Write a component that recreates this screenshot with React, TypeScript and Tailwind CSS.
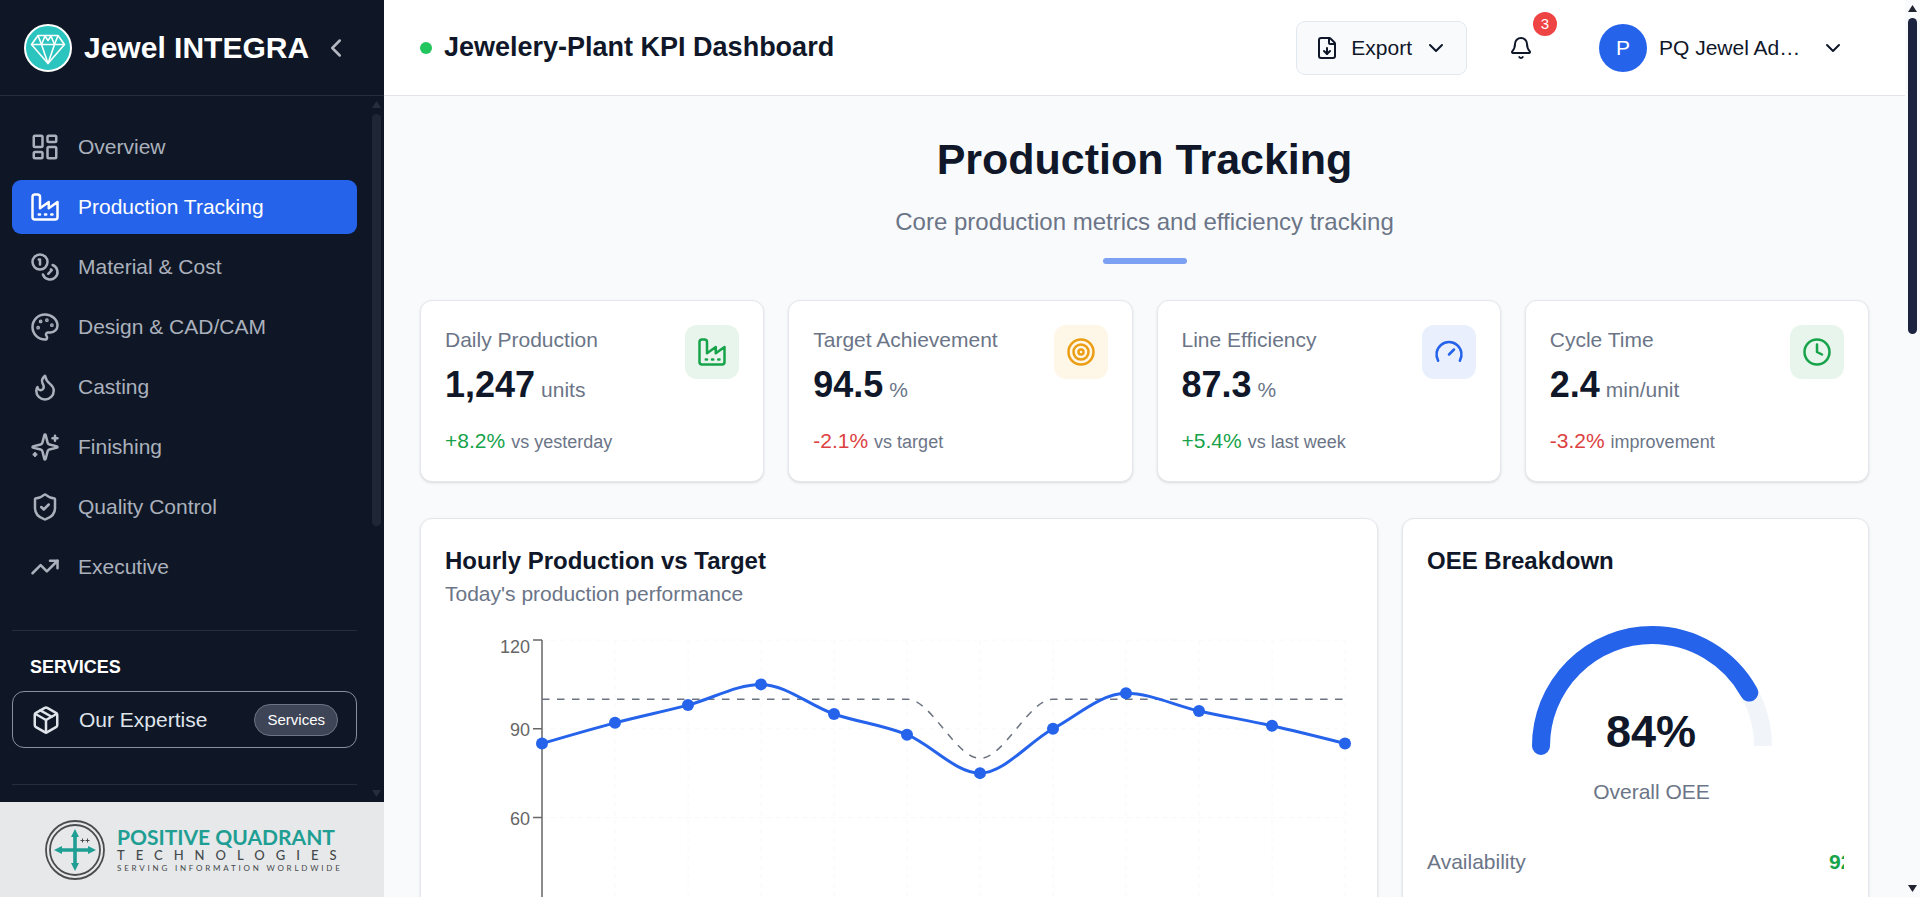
import type { ComponentType, ReactNode } from "react";
import {
  Bell,
  ChevronDown,
  ChevronLeft,
  Clock,
  FileDown,
  Gauge,
  LayoutDashboard,
  Package,
  ShieldCheck,
  Target,
  TrendingUp,
} from "lucide-react";

type IconType = ComponentType<{ className?: string }>;

type NavItem = { label: string; icon: IconType };

type Kpi = {
  title: string;
  value: string;
  unit: string;
  change: string;
  note: string;
  icon: IconType;
  iconStyle: string;
};

const outline = (shapes: ReactNode): IconType =>
  ({ className }) => (
    <svg
      viewBox="0 0 24 24"
      className={className}
      fill="none"
      stroke="currentColor"
      strokeWidth="2"
      strokeLinecap="round"
      strokeLinejoin="round"
      aria-hidden="true"
    >
      {shapes}
    </svg>
  );

const Factory = outline(
  <>
    <path d="M2 20a2 2 0 0 0 2 2h16a2 2 0 0 0 2-2V8l-7 5V8l-7 5V4a2 2 0 0 0-2-2H4a2 2 0 0 0-2 2Z" />
    <path d="M17 18h1M12 18h1M7 18h1" />
  </>
);

const Coins = outline(
  <>
    <circle cx="8" cy="8" r="6" />
    <path d="M18.09 10.37A6 6 0 1 1 10.34 18" />
    <path d="M7 6h1v4" />
    <path d="m16.71 13.88.7.71-2.82 2.82" />
  </>
);

const Palette = outline(
  <>
    <circle cx="13.5" cy="6.5" r=".5" fill="currentColor" />
    <circle cx="17.5" cy="10.5" r=".5" fill="currentColor" />
    <circle cx="8.5" cy="7.5" r=".5" fill="currentColor" />
    <circle cx="6.5" cy="12.5" r=".5" fill="currentColor" />
    <path d="M12 2C6.5 2 2 6.5 2 12s4.5 10 10 10c.926 0 1.648-.746 1.648-1.688 0-.437-.18-.835-.437-1.125-.29-.289-.438-.652-.438-1.125a1.64 1.64 0 0 1 1.668-1.668h1.996c3.051 0 5.555-2.503 5.555-5.554C21.965 6.012 17.461 2 12 2z" />
  </>
);

const Flame = outline(
  <path d="M8.5 14.5A2.5 2.5 0 0 0 11 12c0-1.38-.5-2-1-3-1.072-2.143-.224-4.054 2-6 .5 2.5 2 4.9 4 6.5 2 1.6 3 3.5 3 5.5a7 7 0 1 1-14 0c0-1.153.433-2.294 1-3a2.5 2.5 0 0 0 2.5 2.5z" />
);

const Sparkles = outline(
  <>
    <path d="M9.937 15.5A2 2 0 0 0 8.5 14.063l-6.135-1.582a.5.5 0 0 1 0-.962L8.5 9.936A2 2 0 0 0 9.937 8.5l1.582-6.135a.5.5 0 0 1 .963 0L14.063 8.5A2 2 0 0 0 15.5 9.937l6.135 1.581a.5.5 0 0 1 0 .964L15.5 14.063a2 2 0 0 0-1.437 1.437l-1.582 6.135a.5.5 0 0 1-.963 0z" />
    <path d="M20 3v4M22 5h-4M4 17v2M5 18H3" />
  </>
);

const navItems: NavItem[] = [
  { label: "Overview", icon: LayoutDashboard },
  { label: "Production Tracking", icon: Factory },
  { label: "Material & Cost", icon: Coins },
  { label: "Design & CAD/CAM", icon: Palette },
  { label: "Casting", icon: Flame },
  { label: "Finishing", icon: Sparkles },
  { label: "Quality Control", icon: ShieldCheck },
  { label: "Executive", icon: TrendingUp },
];

const kpis: Kpi[] = [
  {
    title: "Daily Production",
    value: "1,247",
    unit: "units",
    change: "+8.2%",
    note: "vs yesterday",
    icon: Factory,
    iconStyle: "bg-[#e8f5ec] text-[#16a34a]",
  },
  {
    title: "Target Achievement",
    value: "94.5",
    unit: "%",
    change: "-2.1%",
    note: "vs target",
    icon: Target,
    iconStyle: "bg-[#fef6e6] text-[#eb9d13]",
  },
  {
    title: "Line Efficiency",
    value: "87.3",
    unit: "%",
    change: "+5.4%",
    note: "vs last week",
    icon: Gauge,
    iconStyle: "bg-[#e9effd] text-[#2563eb]",
  },
  {
    title: "Cycle Time",
    value: "2.4",
    unit: "min/unit",
    change: "-3.2%",
    note: "improvement",
    icon: Clock,
    iconStyle: "bg-[#e8f5ec] text-[#16a34a]",
  },
];

const actual = [85, 92, 98, 105, 95, 88, 75, 90, 102, 96, 91, 85];
const target = [100, 100, 100, 100, 100, 100, 80, 100, 100, 100, 100, 100];

const CHART = { width: 908, height: 450, left: 97, right: 900, top: 7, bottom: 362 };

const chartX = (i: number) =>
  CHART.left + (i * (CHART.right - CHART.left)) / (actual.length - 1);
const chartY = (v: number) =>
  CHART.bottom - (v / 120) * (CHART.bottom - CHART.top);

// Monotone cubic interpolation, so that the line never overshoots a reading
const monotonePath = (values: number[]) => {
  const n = values.length;
  const dx = chartX(1) - chartX(0);
  const ys = values.map(chartY);
  const slopes = ys.slice(1).map((y, i) => (y - ys[i]) / dx);
  const tangents = ys.map((_, i) => {
    if (i === 0 || i === n - 1) return 0;
    const a = slopes[i - 1];
    const b = slopes[i];
    if (a * b <= 0) return 0;
    return Math.sign(a) * Math.min(Math.abs(a), Math.abs(b), Math.abs(a + b) / 4) * 2;
  });
  tangents[0] = (3 * slopes[0] - tangents[1]) / 2;
  tangents[n - 1] = (3 * slopes[n - 2] - tangents[n - 2]) / 2;

  let d = `M${chartX(0)},${ys[0]}`;
  for (let i = 0; i < n - 1; i++) {
    const x0 = chartX(i);
    const x1 = chartX(i + 1);
    d += `C${x0 + dx / 3},${ys[i] + (tangents[i] * dx) / 3} ${x1 - dx / 3},${
      ys[i + 1] - (tangents[i + 1] * dx) / 3
    } ${x1},${ys[i + 1]}`;
  }
  return d;
};

const DiamondLogo = () => (
  <svg viewBox="0 0 48 48" className="size-12 shrink-0" aria-hidden="true">
    <circle cx="24" cy="24" r="23" fill="#2bc4bf" stroke="#fff" strokeWidth="2" />
    <g fill="none" stroke="#fff" strokeWidth="1.6" strokeLinejoin="round">
      <path d="M14 11.5H34L40.5 20.5L24 39.5L7.5 20.5Z" />
      <path d="M7.5 20.5H40.5M14 11.5L17.5 20.5L24 39.5L30.5 20.5L34 11.5" />
      <path d="M17.5 20.5L21 12L24 16.5L27 12L30.5 20.5" />
    </g>
  </svg>
);

const CompanyLogo = () => (
  <div className="flex items-center gap-3">
    <svg viewBox="0 0 60 60" className="size-15 shrink-0" aria-hidden="true">
      <g fill="none" stroke="#4a4d50">
        <circle cx="30" cy="30" r="29" strokeWidth="1.8" />
        <circle cx="30" cy="30" r="25" strokeWidth="1.8" />
      </g>
      <path d="M30 15V45M15 30H45" stroke="#1f9e94" strokeWidth="3.6" />
      <path
        fill="#1f9e94"
        d="M30 9L34 17H26ZM30 51L34 43H26ZM9 30L17 26V34ZM51 30L43 26V34Z"
      />
      <path d="M35.5 20.5h4M37.5 18.5v4M40.5 20.5h4M42.5 18.5v4" stroke="#4a4d50" />
    </svg>
    <div className="flex flex-col font-[Lato,sans-serif] whitespace-nowrap text-[#45484b]">
      <span className="text-[21px] leading-5 font-bold text-[#1f9e94]">POSITIVE QUADRANT</span>
      <span className="text-[13px] leading-4 font-medium tracking-[11px]">TECHNOLOGIES</span>
      <span className="text-[8px] leading-[10px] tracking-[0.35em]">SERVING INFORMATION WORLDWIDE</span>
    </div>
  </div>
);

const ScrollRail = ({ tone }: { tone: "dark" | "light" }) => {
  const dark = tone === "dark";
  const arrow = dark ? "fill-[#262e3d]" : "fill-[#1f2430]";
  return (
    <div
      aria-hidden="true"
      className={`flex w-[15px] shrink-0 flex-col items-center ${dark ? "ml-3" : ""}`}
    >
      <svg viewBox="0 0 15 18" className="h-[18px] w-full shrink-0">
        <path d="M7.5 5L12 12H3Z" className={arrow} />
      </svg>
      <div className="min-h-0 w-full flex-1 px-[3px]">
        <div className={dark ? "h-103 rounded-full bg-[#1f2737]" : "h-79 rounded-full bg-[#1c2340]"} />
      </div>
      <svg viewBox="0 0 15 18" className="h-[18px] w-full shrink-0">
        <path d="M7.5 13L12 6H3Z" className={arrow} />
      </svg>
    </div>
  );
};

const Sidebar = () => (
  <aside className="flex w-96 shrink-0 flex-col bg-[#0f1726]">
    <div className="flex h-24 shrink-0 items-center gap-3 border-b border-[#262e3d] px-6">
      <DiamondLogo />
      <span className="text-[30px] font-bold whitespace-nowrap text-white">Jewel INTEGRA</span>
      <button type="button" aria-label="Collapse sidebar" className="text-[#b3b8c1]">
        <ChevronLeft className="size-[30px]" />
      </button>
    </div>

    <div className="flex min-h-0 flex-1">
      <div className="flex-1 overflow-hidden pt-6 pl-3">
        <nav className="flex flex-col gap-1.5">
          {navItems.map(({ label, icon: Icon }) => {
            const active = label === "Production Tracking";
            return (
              <a
                key={label}
                href="#"
                aria-current={active ? "page" : undefined}
                className={`flex h-[54px] items-center gap-[18px] rounded-[9px] px-[18px] text-[21px] ${
                  active ? "bg-[#2563eb] text-white" : "text-[#abb1bc]"
                }`}
              >
                <Icon className="size-[30px] shrink-0" />
                {label}
              </a>
            );
          })}
        </nav>

        <div className="mt-9 border-t border-[#262e3d] pt-6">
          <h2 className="px-[18px] text-lg leading-6 font-bold text-white">SERVICES</h2>
          <a
            href="#"
            className="mt-3 flex h-[57px] items-center rounded-xl border border-[#8a909b] px-[18px] text-[21px] text-[#dfe3ea]"
          >
            <Package className="size-[30px] shrink-0" />
            <span className="ml-[18px] flex-1">Our Expertise</span>
            <span className="rounded-full border border-[#6c7382] bg-[#3e4556] px-3 py-1 text-[15px] leading-[22px] text-white">
              Services
            </span>
          </a>
        </div>
        <div className="mt-9 border-t border-[#262e3d]" />
      </div>
      <ScrollRail tone="dark" />
    </div>

    <div className="flex h-[95px] shrink-0 items-center bg-[#e6e8e9] pl-[45px]">
      <CompanyLogo />
    </div>
  </aside>
);

const Header = () => (
  <header className="flex h-24 shrink-0 items-center justify-between border-b border-[#e2e5ea] bg-white px-9">
    <div className="flex items-center gap-3">
      <span className="size-3 rounded-full bg-[#22c55e]" />
      <h1 className="text-[27px] font-bold text-[#0f1729]">Jewelery-Plant KPI Dashboard</h1>
    </div>
    <div className="flex items-center gap-6 text-[#0f1729]">
      <button
        type="button"
        className="flex h-[54px] items-center gap-3 rounded-[9px] border border-[#e2e8f0] bg-[#f8fafc] px-[18px] text-[21px]"
      >
        <FileDown className="size-6" />
        Export
        <ChevronDown className="size-6" />
      </button>
      <button type="button" aria-label="Notifications" className="relative grid size-[60px] place-items-center">
        <Bell className="size-6" />
        <span className="absolute -top-1.5 -right-1.5 grid size-6 place-items-center rounded-full bg-[#ef4444] text-[15px] leading-none text-white">
          3
        </span>
      </button>
      <button type="button" className="flex items-center gap-3 px-6 text-[21px]">
        <span className="grid size-12 place-items-center rounded-full bg-[#2563eb] text-white">P</span>
        <span className="w-36 truncate text-left">PQ Jewel Admin</span>
        <ChevronDown className="ml-1.5 size-6" />
      </button>
    </div>
  </header>
);

const KpiCard = ({ title, value, unit, change, note, icon: Icon, iconStyle }: Kpi) => (
  <article className="flex justify-between rounded-xl border border-[#e4e8ee] bg-white p-6 shadow-sm">
    <div>
      <h3 className="text-[21px] leading-[30px] text-[#6b7587]">{title}</h3>
      <p className="mt-[7px] flex items-baseline gap-1.5">
        <span className="text-4xl leading-[45px] font-bold text-[#0f1729]">{value}</span>
        <span className="text-[21px] text-[#6b7587]">{unit}</span>
      </p>
      <p className="mt-[19px] flex items-baseline gap-1.5 text-[21px] leading-[30px]">
        <span className={change.startsWith("+") ? "text-[#16a34a]" : "text-[#dc4141]"}>{change}</span>
        <span className="text-lg leading-[30px] text-[#6b7587]">{note}</span>
      </p>
    </div>
    <span className={`grid size-[54px] shrink-0 place-items-center rounded-xl ${iconStyle}`}>
      <Icon className="size-[30px]" />
    </span>
  </article>
);

const HourlyChart = () => (
  <svg
    viewBox={`0 0 ${CHART.width} ${CHART.height}`}
    className="mt-6 w-full"
    role="img"
    aria-label="Hourly production against target"
  >
    <g stroke="#f7f8fa" strokeDasharray="4.5 4.5">
      {actual.map((_, i) => (
        <path key={i} d={`M${chartX(i)},${CHART.top}V${CHART.bottom}`} />
      ))}
      {[0, 30, 60, 90, 120].map((v) => (
        <path key={v} d={`M${CHART.left},${chartY(v)}H${CHART.right}`} />
      ))}
    </g>
    <path d={`M${CHART.left},${CHART.top}V${CHART.bottom}`} stroke="#666" strokeWidth="1.5" />
    {[30, 60, 90, 120].map((v) => (
      <g key={v}>
        <path d={`M${CHART.left - 9},${chartY(v)}h9`} stroke="#666" strokeWidth="1.5" />
        <text
          x={CHART.left - 12}
          y={chartY(v) + (v === 120 ? 13 : 7)}
          textAnchor="end"
          fill="#666"
          fontSize="18"
        >
          {v}
        </text>
      </g>
    ))}
    <path d={monotonePath(target)} fill="none" stroke="#6b7280" strokeWidth="1.5" strokeDasharray="7.5 7.5" />
    <path d={monotonePath(actual)} fill="none" stroke="#2563eb" strokeWidth="3" />
    {actual.map((v, i) => (
      <circle key={i} cx={chartX(i)} cy={chartY(v)} r="6" fill="#2563eb" />
    ))}
  </svg>
);

const OeeGauge = () => (
  <svg viewBox="0 0 240 150" className="h-[150px] w-60" role="img" aria-label="Overall OEE 84%">
    <path d="M9 131A111 111 0 0 1 231 131" fill="none" stroke="#f1f5f9" strokeWidth="18" />
    <path
      d="M9 131A111 111 0 0 1 231 131"
      fill="none"
      stroke="#2563eb"
      strokeWidth="18"
      strokeLinecap="round"
      pathLength={100}
      strokeDasharray="84 100"
    />
    <text x="119" y="132" textAnchor="middle" fontSize="45" fontWeight="700" fill="#0f1729">
      84%
    </text>
  </svg>
);

const App = () => (
  <div className="flex h-screen overflow-hidden bg-[#f9fafc] font-['Liberation_Sans',Arial,sans-serif]">
    <Sidebar />
    <div className="flex min-w-0 flex-1 flex-col overflow-hidden">
      <Header />
      <main className="min-h-0 flex-1 overflow-hidden px-9 pt-9">
        <div className="flex flex-col items-center">
          <h2 className="text-[43px] leading-[54px] font-bold text-[#0f1729]">Production Tracking</h2>
          <p className="mt-[18px] text-2xl leading-9 text-[#6b7587]">
            Core production metrics and efficiency tracking
          </p>
          <span className="mt-[18px] h-1.5 w-[84px] rounded-full bg-[#7ca1f3]" />
        </div>

        <section className="mt-9 grid grid-cols-4 gap-6">
          {kpis.map((kpi) => (
            <KpiCard key={kpi.title} {...kpi} />
          ))}
        </section>

        <section className="mt-9 flex gap-6">
          <article className="min-w-0 flex-1 rounded-xl border border-[#e4e8ee] bg-white p-6 shadow-sm">
            <h3 className="text-2xl leading-9 font-bold text-[#0f1729]">Hourly Production vs Target</h3>
            <p className="text-[21px] leading-[30px] text-[#6b7587]">Today's production performance</p>
            <HourlyChart />
          </article>
          <article className="w-[467px] shrink-0 rounded-xl border border-[#e4e8ee] bg-white p-6 shadow-sm">
            <h3 className="text-2xl leading-9 font-bold text-[#0f1729]">OEE Breakdown</h3>
            <div className="mt-9 flex flex-col items-center pl-8">
              <OeeGauge />
              <p className="mt-3 text-[21px] leading-[30px] text-[#6b7587]">Overall OEE</p>
            </div>
            <div className="mt-10 flex items-center justify-between text-[21px] leading-[30px]">
              <span className="text-[#6b7587]">Availability</span>
              <span className="w-[15px] overflow-hidden font-bold text-[#16a34a]">92%</span>
            </div>
          </article>
        </section>
      </main>
    </div>
    <ScrollRail tone="light" />
  </div>
);

export default App;
